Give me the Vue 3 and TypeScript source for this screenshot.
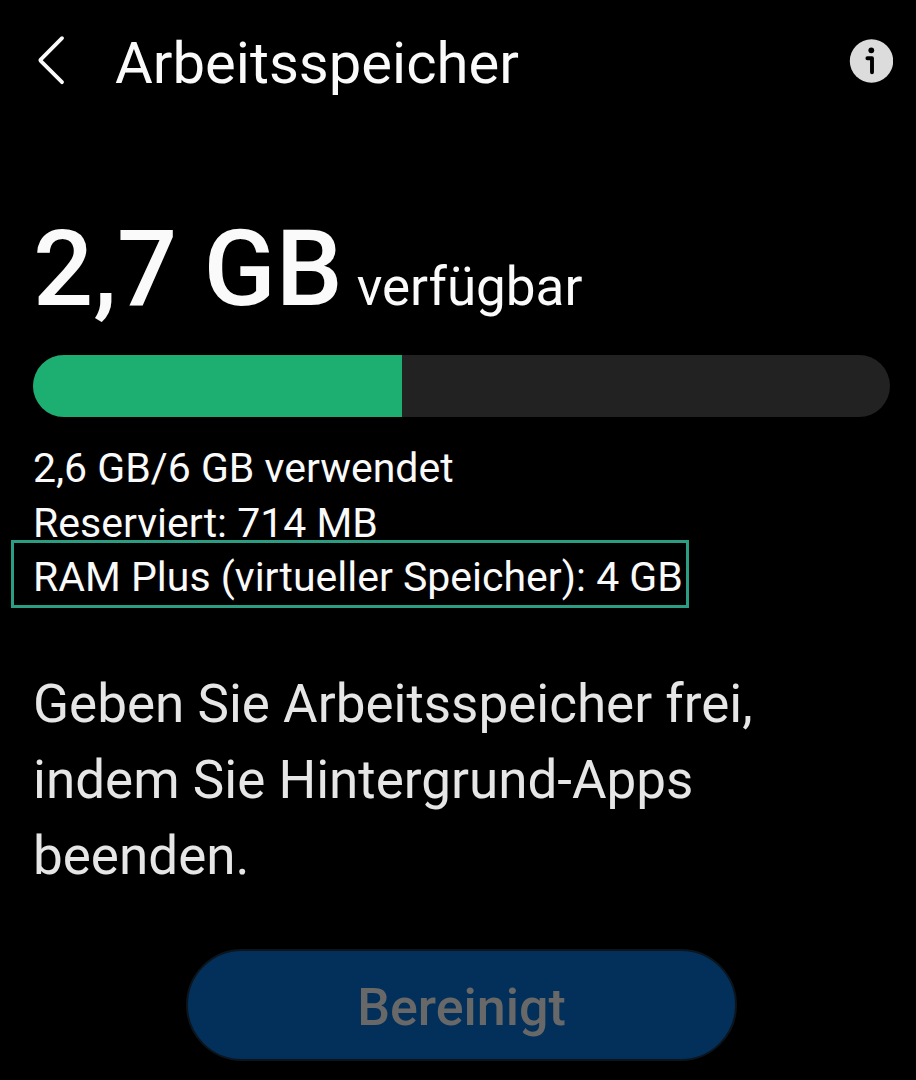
<script setup lang="ts">
const usedPercent = 43
const details: string[] = ['2,6 GB/6 GB verwendet', 'Reserviert: 714 MB']
</script>

<template>
  <main class="screen">
    <header class="bar">
      <button class="icon-button back" type="button" aria-label="Zurück">
        <svg width="30" height="52" viewBox="0 0 30 52" fill="none" stroke="#fafafa" stroke-width="3.8" stroke-linecap="round" stroke-linejoin="round">
          <path d="M26 3.2 4.9 24.3Q4 25.2 4.9 26.1L26 47.2" />
        </svg>
      </button>
      <h1 class="title">Arbeitsspeicher</h1>
      <button class="icon-button info" type="button" aria-label="Info">
        <svg width="44" height="44" viewBox="0 0 44 44">
          <circle cx="22.5" cy="22" r="21.7" fill="#dcdcdc" />
          <circle cx="22.3" cy="11.3" r="2.9" fill="#000" />
          <path d="M18.4 19.2H23V33.2" fill="none" stroke="#000" stroke-width="3.9" stroke-linecap="round" stroke-linejoin="round" />
        </svg>
      </button>
    </header>

    <section class="memory">
      <p class="available"><strong class="amount">2,7 GB</strong> <span>verfügbar</span></p>
      <div class="meter" role="img" aria-label="2,6 GB/6 GB verwendet">
        <div class="used" :style="{ width: usedPercent + '%' }"></div>
      </div>
      <ul class="details">
        <li v-for="line in details" :key="line">{{ line }}</li>
        <li class="marked">RAM Plus (virtueller Speicher): 4 GB</li>
      </ul>
    </section>

    <p class="hint">Geben Sie Arbeitsspeicher frei, indem Sie Hintergrund-Apps beenden.</p>

    <button class="clean" type="button" disabled>Bereinigt</button>
  </main>
</template>

<style>
body {
  background: #000;
}
</style>

<style scoped>
.screen {
  box-sizing: border-box;
  min-height: 100vh;
  padding: 23px 26px 19px 33px;
  display: flex;
  flex-direction: column;
  background: #000;
  color: #fafafa;
  font-family: Roboto, sans-serif;
}
.bar {
  display: flex;
  align-items: center;
  height: 76px;
}
.icon-button {
  display: flex;
  padding: 0;
  border: 0;
  background: none;
}
.back {
  margin-left: 3px;
}
.info {
  margin-right: -3px;
}
.title {
  flex: 1;
  margin: 0 0 0 49px;
  padding-top: 3px;
  font-size: 58px;
  line-height: 76px;
  font-weight: 400;
}
.memory {
  margin-top: 106px;
}
.available {
  display: flex;
  align-items: baseline;
  gap: 14px;
  margin: 0;
  font-size: 53px;
  line-height: 64px;
}
.amount {
  font-size: 106px;
  line-height: 128px;
  font-weight: 500;
}
.meter {
  height: 62px;
  margin-top: 22px;
  overflow: hidden;
  border-radius: 31px;
  background: #222;
}
.used {
  height: 100%;
  background: #1dae72;
}
.details {
  margin: 24px 0 0;
  padding: 0;
  list-style: none;
  font-size: 41px;
  line-height: 55px;
}
.marked {
  width: fit-content;
  margin: -11px 0 0 -22px;
  padding: 7px 3px 0 19px;
  border: 3px solid #2a9d83;
}
.hint {
  max-width: 760px;
  margin: 58px 0 0;
  font-size: 53px;
  line-height: 76px;
  color: #e6e6e6;
}
.clean {
  height: 112px;
  margin: 55px 153px 0;
  padding: 5px 0 0;
  border: 2px solid #0c151d;
  border-radius: 56px;
  background: #02305a;
  color: #686868;
  font: 500 52px/64px Roboto, sans-serif;
}
</style>
